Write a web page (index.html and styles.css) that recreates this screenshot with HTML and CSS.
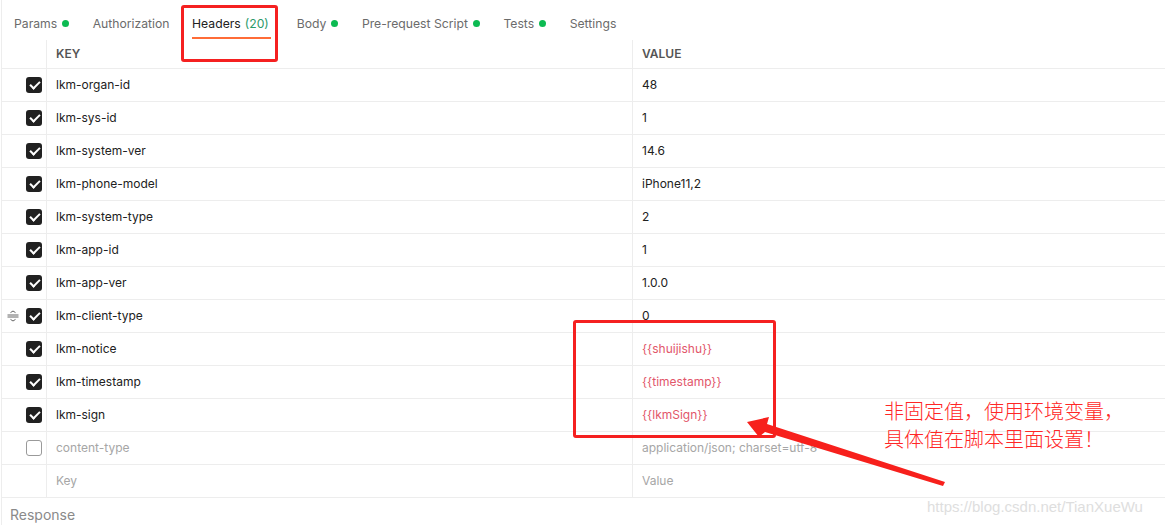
FILE: index.html
```
<!DOCTYPE html>
<html lang="en">
<head>
    <meta charset="UTF-8">
    <title>Headers</title>
    <link rel="stylesheet" href="styles.css">
</head>
<body>
    <div class="page">
        <div class="tabs">
            <span class="tab">Params <i class="dot"></i></span>
            <span class="tab">Authorization</span>
            <span class="tab active">Headers <em>(20)</em></span>
            <span class="tab">Body <i class="dot"></i></span>
            <span class="tab">Pre-request Script <i class="dot"></i></span>
            <span class="tab">Tests <i class="dot"></i></span>
            <span class="tab">Settings</span>
        </div>

        <div class="table">
            <div class="row head">
                <div class="cell check"></div>
                <div class="cell key">KEY</div>
                <div class="cell value">VALUE</div>
            </div>
            <div class="row"><div class="cell check"><span class="box on"></span></div><div class="cell key">lkm-organ-id</div><div class="cell value">48</div></div>
            <div class="row"><div class="cell check"><span class="box on"></span></div><div class="cell key">lkm-sys-id</div><div class="cell value">1</div></div>
            <div class="row"><div class="cell check"><span class="box on"></span></div><div class="cell key">lkm-system-ver</div><div class="cell value">14.6</div></div>
            <div class="row"><div class="cell check"><span class="box on"></span></div><div class="cell key">lkm-phone-model</div><div class="cell value">iPhone11,2</div></div>
            <div class="row"><div class="cell check"><span class="box on"></span></div><div class="cell key">lkm-system-type</div><div class="cell value">2</div></div>
            <div class="row"><div class="cell check"><span class="box on"></span></div><div class="cell key">lkm-app-id</div><div class="cell value">1</div></div>
            <div class="row"><div class="cell check"><span class="box on"></span></div><div class="cell key">lkm-app-ver</div><div class="cell value">1.0.0</div></div>
            <div class="row">
                <div class="cell check">
                    <svg class="grip" width="12" height="12" viewBox="0 0 12 12"><path d="M3.5 2.6 L6 1 L8.5 2.6 M0.5 5 H11.5 M0.5 7 H11.5 M3.5 9.4 L6 11 L8.5 9.4" fill="none" stroke="#666" stroke-width="1"/></svg>
                    <span class="box on"></span>
                </div>
                <div class="cell key">lkm-client-type</div><div class="cell value">0</div>
            </div>
            <div class="row"><div class="cell check"><span class="box on"></span></div><div class="cell key">lkm-notice</div><div class="cell value var">{{shuijishu}}</div></div>
            <div class="row"><div class="cell check"><span class="box on"></span></div><div class="cell key">lkm-timestamp</div><div class="cell value var">{{timestamp}}</div></div>
            <div class="row"><div class="cell check"><span class="box on"></span></div><div class="cell key">lkm-sign</div><div class="cell value var">{{lkmSign}}</div></div>
            <div class="row off"><div class="cell check"><span class="box"></span></div><div class="cell key">content-type</div><div class="cell value">application/json; charset=utf-8</div></div>
            <div class="row empty"><div class="cell check"></div><div class="cell key">Key</div><div class="cell value">Value</div></div>
        </div>

        <div class="response">Response</div>
    </div>

    <!-- annotations drawn over the screenshot -->
    <div class="mark mark-tab"></div>
    <div class="mark mark-vars"></div>
    <svg class="arrow" width="1165" height="525" viewBox="0 0 1165 525">
        <polygon points="747,422 769,417 767,424 945,482 943,486 765,432 759,437" fill="#f7201c"/>
    </svg>
    <div class="note">非固定值，使用环境变量，<br>具体值在脚本里面设置！</div>
    <div class="watermark">https://blog.csdn.net/TianXueWu</div>
</body>
</html>
```

FILE: styles.css
```
body {
    margin: 0;
    font-family: Inter, "Noto Sans", sans-serif;
    font-size: 12px;
    color: #212121;
    background: #fff;
    width: 1165px;
    height: 525px;
    overflow: hidden;
    position: relative;
}

.page {
    margin-left: 1px;
    border-left: 1px solid #ededed;
    height: 525px;
}

.tabs {
    display: flex;
    align-items: center;
    height: 40px;
    padding-left: 12px;
}

.tab {
    position: relative;
    display: flex;
    align-items: center;
    height: 40px;
    padding-top: 7px;
    box-sizing: border-box;
    color: #6b6b6b;
    font-size: 12.2px;
    margin-right: 23.5px;
}

.tab .dot {
    width: 7px;
    height: 7px;
    border-radius: 50%;
    background: #0cbb52;
    margin-left: 5px;
}

.tab.active {
    color: #212121;
    margin-left: -1px;
    margin-right: 28px;
}

.tab.active em {
    font-style: normal;
    color: #2b9a6a;
    margin-left: 4px;
}

.tab.active::after {
    content: "";
    position: absolute;
    left: 0;
    right: -2px;
    bottom: 1px;
    height: 2px;
    background: #ff6c37;
}

.row {
    display: grid;
    grid-template-columns: 45px 586px 1fr;
    height: 33px;
    border-bottom: 1px solid #ededed;
    box-sizing: border-box;
}

.row.head {
    height: 29px;
}

.cell {
    display: flex;
    align-items: center;
    padding-left: 9px;
    padding-bottom: 1px;
    box-sizing: border-box;
}

.cell.check {
    padding-left: 0;
    justify-content: flex-end;
    padding-right: 4px;
    border-right: 1px solid #ededed;
    position: relative;
}

.cell.key {
    border-right: 1px solid #ededed;
}

.head .cell {
    font-weight: 600;
    color: #555;
    font-size: 12px;
}

.box {
    width: 14px;
    height: 14px;
    border: 1px solid #9a9a9a;
    border-radius: 3px;
    background: #fff;
}

.box.on {
    width: 16px;
    height: 16px;
    border: none;
    background: #212121;
    position: relative;
}

.box.on::after {
    content: "";
    position: absolute;
    left: 5.5px;
    top: 2px;
    width: 4px;
    height: 8px;
    border: solid #fff;
    border-width: 0 2px 2px 0;
    transform: rotate(45deg);
}

.grip {
    position: absolute;
    left: 5px;
    top: 10px;
}

.value.var {
    color: #e2566a;
}

.row.off .cell.key,
.row.off .cell.value,
.row.empty .cell.key,
.row.empty .cell.value {
    color: #a6a6a6;
}

.response {
    padding: 8px 0 0 8px;
    font-size: 14px;
    color: #8a8a8a;
}

.mark {
    position: absolute;
    border: 3px solid #f52020;
    border-radius: 3px;
    box-sizing: border-box;
}

.mark-tab {
    left: 181px;
    top: 5px;
    width: 97px;
    height: 57px;
}

.mark-vars {
    left: 573px;
    top: 320px;
    width: 203px;
    height: 118px;
}

.arrow {
    position: absolute;
    left: 0;
    top: 0;
}

.note {
    position: absolute;
    left: 884px;
    top: 397px;
    font-family: "Noto Sans CJK SC", sans-serif;
    font-weight: 300;
    font-size: 20px;
    line-height: 28px;
    color: #ff2626;
}

.watermark {
    position: absolute;
    left: 927px;
    top: 498px;
    font-family: "Liberation Sans", Arial, sans-serif;
    font-size: 15px;
    color: #dedede;
}
```
